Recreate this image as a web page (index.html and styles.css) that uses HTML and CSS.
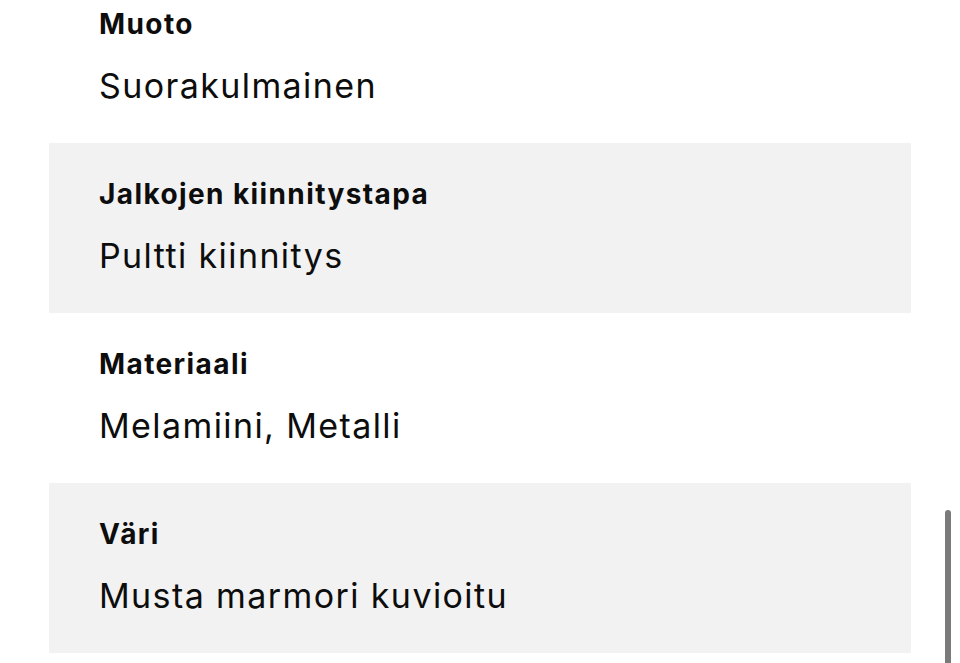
FILE: index.html
```
<!DOCTYPE html>
<html lang="fi">
<head>
<meta charset="utf-8">
<title>Ominaisuudet</title>
<link rel="stylesheet" href="styles.css">
</head>
<body>
<div class="specs">
  <div class="row">
    <div class="label">Muoto</div>
    <div class="value">Suorakulmainen</div>
  </div>
  <div class="row alt">
    <div class="label">Jalkojen kiinnitystapa</div>
    <div class="value">Pultti kiinnitys</div>
  </div>
  <div class="row">
    <div class="label">Materiaali</div>
    <div class="value">Melamiini, Metalli</div>
  </div>
  <div class="row alt">
    <div class="label">Väri</div>
    <div class="value">Musta marmori kuvioitu</div>
  </div>
</div>
<div class="scrollbar"></div>
</body>
</html>
```
FILE: styles.css
```
html, body {
  margin: 0;
  padding: 0;
  background: #fff;
  overflow: hidden;
}
body {
  font-family: Inter, "Noto Sans", sans-serif;
  color: #0d0d0d;
}
.specs {
  margin: -27px 49px 0 49px;
  display: flex;
  flex-direction: column;
}
.row {
  height: 170px;
  box-sizing: border-box;
  padding: 31px 50px 0 50px;
  display: flex;
  flex-direction: column;
  gap: 18px;
}
.row.alt {
  background: #f2f2f2;
}
.label {
  font-size: 28px;
  line-height: 40px;
  font-weight: 700;
  letter-spacing: 1.4px;
}
.value {
  font-size: 34px;
  line-height: 48px;
  font-weight: 400;
  letter-spacing: 1.4px;
}
.scrollbar {
  position: fixed;
  left: 945px;
  top: 510px;
  width: 6px;
  height: 170px;
  border-radius: 3px;
  background: #7a7a7a;
}
```
